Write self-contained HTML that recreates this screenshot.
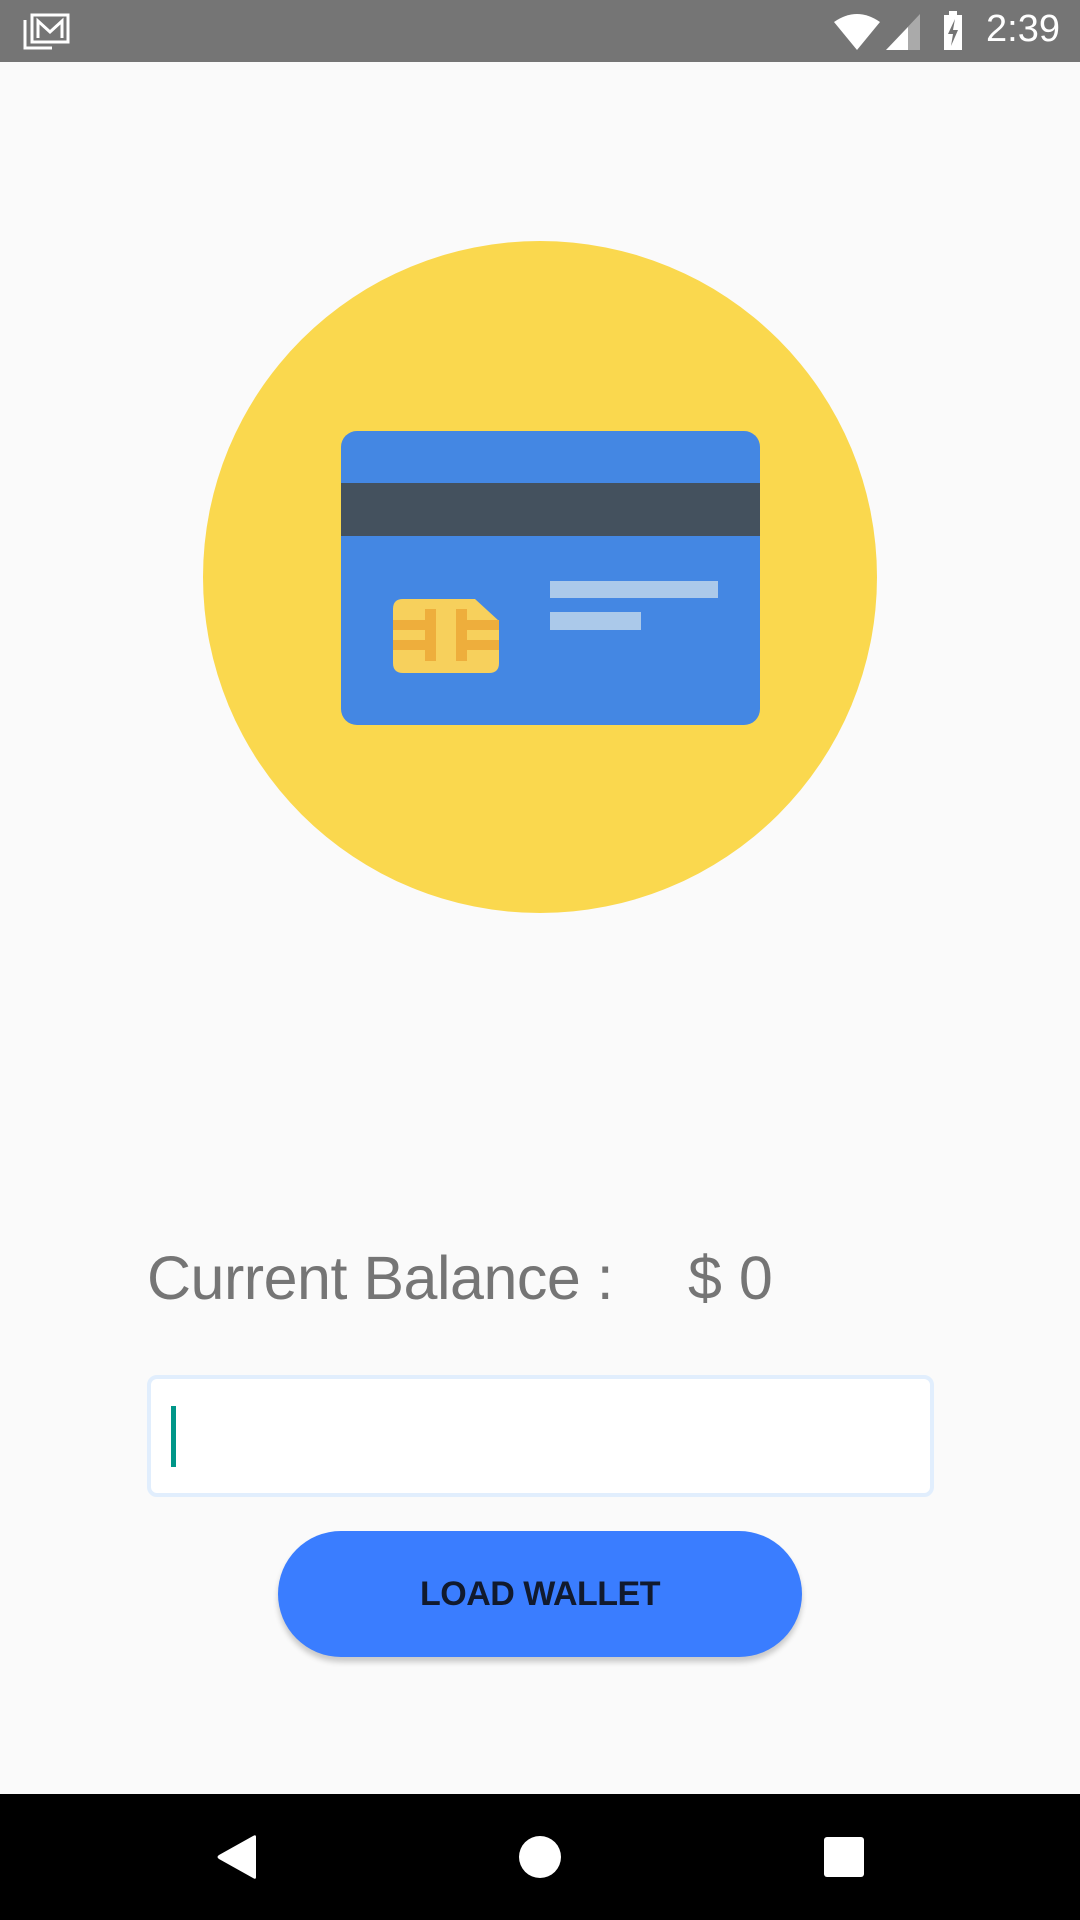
<!DOCTYPE html>
<html><head><meta charset="utf-8"><style>
*{margin:0;padding:0;box-sizing:border-box}
body{width:1080px;height:1920px;background:#fafafa;position:relative;overflow:hidden;font-family:"Liberation Sans",sans-serif}
.status{position:absolute;left:0;top:0;width:1080px;height:62px;background:#757575}
.nav{position:absolute;left:0;top:1794px;width:1080px;height:126px;background:#000}
.abs{position:absolute}
</style></head><body>
<div class="status">
<svg class="abs" style="left:22px;top:12px" width="50" height="40" viewBox="0 0 50 40">
<path d="M3 8 V36 H30" fill="none" stroke="#fff" stroke-width="3"/>
<rect x="10" y="3" width="36" height="27" fill="none" stroke="#fff" stroke-width="3"/>
<path d="M16 26 V9 L28 20 L40 9 V26" fill="none" stroke="#fff" stroke-width="3"/>
</svg>
<svg class="abs" style="left:832px;top:12px" width="50" height="40" viewBox="0 0 50 40">
<path d="M2 10 Q25 -6 48 10 L25 38 Z" fill="#fff"/>
</svg>
<svg class="abs" style="left:884px;top:12px" width="40" height="40" viewBox="0 0 40 40">
<path d="M2 38 L36 2 V38 Z" fill="#aaa"/><path d="M2 38 L24 15 V38 Z" fill="#fff"/>
</svg>
<svg class="abs" style="left:941px;top:10px" width="26" height="42" viewBox="0 0 26 42">
<rect x="8" y="1" width="8" height="4" fill="#fff"/><rect x="3" y="5" width="18" height="35" fill="#fff"/>
<path d="M14 9 L7 24 H12 L10 36 L17 20 H12 Z" fill="#757575"/>
</svg>
<div class="abs" style="left:986px;top:8px;color:#fff;font-size:38px;">2:39</div>
</div>

<div class="abs" style="left:203px;top:241px;width:674px;height:672px;border-radius:50%;background:#fad84e"></div>
<div class="abs" style="left:341px;top:431px;width:419px;height:294px;border-radius:16px;background:#4487e3;overflow:hidden">
<div class="abs" style="left:0;top:52px;width:419px;height:53px;background:#44515e"></div>
<div class="abs" style="left:209px;top:150px;width:168px;height:17px;background:#abc9ea"></div>
<div class="abs" style="left:209px;top:181px;width:91px;height:18px;background:#abc9ea"></div>
</div>
<svg class="abs" style="left:393px;top:599px" width="106" height="74" viewBox="0 0 106 74">
<path d="M10 0 H82 L106 22 V64 Q106 74 96 74 H10 Q0 74 0 64 V10 Q0 0 10 0 Z" fill="#f7d05c"/>
<rect x="0" y="21" width="33" height="10" fill="#eeae3c"/><rect x="0" y="41" width="33" height="10" fill="#eeae3c"/>
<rect x="73" y="21" width="33" height="10" fill="#eeae3c"/><rect x="73" y="41" width="33" height="10" fill="#eeae3c"/>
<rect x="32" y="10" width="11" height="52" fill="#eeae3c"/><rect x="63" y="10" width="11" height="52" fill="#eeae3c"/>
</svg>

<div class="abs" style="left:147px;top:1243px;font-size:61px;color:#757575;letter-spacing:-0.5px;white-space:nowrap">Current Balance :</div>
<div class="abs" style="left:688px;top:1243px;font-size:61px;color:#757575;white-space:nowrap">$ 0</div>

<div class="abs" style="left:147px;top:1375px;width:787px;height:122px;background:#fff;border:4px solid #e1eefd;border-radius:10px"></div>
<div class="abs" style="left:171px;top:1406px;width:5px;height:61px;background:#009688"></div>

<div class="abs" style="left:278px;top:1531px;width:524px;height:126px;border-radius:63px;background:#3a7dff;box-shadow:0 5px 6px rgba(0,0,0,0.2);display:flex;align-items:center;justify-content:center;font-weight:bold;font-size:34px;color:#111a2e;letter-spacing:-0.5px">LOAD WALLET</div>

<div class="nav">
<svg class="abs" style="left:216px;top:40px" width="42" height="46" viewBox="0 0 42 46"><path d="M40 3 V43 Q40 46 37 44 L3 25 Q0 23 3 21 L37 2 Q40 0 40 3 Z" fill="#fff"/></svg>
<div class="abs" style="left:519px;top:42px;width:42px;height:42px;border-radius:50%;background:#fff"></div>
<div class="abs" style="left:824px;top:43px;width:40px;height:40px;border-radius:3px;background:#fff"></div>
</div>
</body></html>
